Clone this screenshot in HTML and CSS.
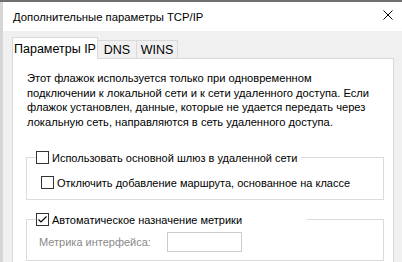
FILE: index.html
```html
<!DOCTYPE html>
<html lang="ru">
<head>
    <meta charset="UTF-8">
    <title>Дополнительные параметры TCP/IP</title>
    <link rel="stylesheet" href="styles.css">
</head>
<body>
    <div class="desktop">
        <div class="edge"></div>
        <div class="dialog">
            <div class="titlebar">
                <span class="title">Дополнительные параметры TCP/IP</span>
                <svg class="close" width="10" height="10" viewBox="0 0 10 10">
                    <path d="M0.5 0.5L9.5 9.5M9.5 0.5L0.5 9.5" stroke="#000" stroke-width="1" fill="none"/>
                </svg>
            </div>

            <div class="content">
                <div class="tabs">
                    <div class="tab active">Параметры IP</div>
                    <div class="tab dns">DNS</div>
                    <div class="tab wins">WINS</div>
                </div>

                <div class="panel">
                    <p class="note">
                        Этот флажок используется только при одновременном<br>
                        подключении к локальной сети и к сети удаленного доступа. Если<br>
                        флажок установлен, данные, которые не удается передать через<br>
                        локальную сеть, направляются в сеть удаленного доступа.
                    </p>

                    <fieldset class="group gateway">
                        <legend>
                            <div class="option">
                                <span class="check"></span>
                                <span>Использовать основной шлюз в удаленной сети</span>
                            </div>
                        </legend>
                        <div class="option sub">
                            <span class="check"></span>
                            <span>Отключить добавление маршрута, основанное на классе</span>
                        </div>
                    </fieldset>

                    <fieldset class="group metric">
                        <legend>
                            <div class="option">
                                <span class="check">
                                    <svg width="11" height="11" viewBox="0 0 11 11">
                                        <path d="M1.5 5.5L4 8L9.5 2.5" stroke="#000" stroke-width="1.2" fill="none"/>
                                    </svg>
                                </span>
                                <span>Автоматическое назначение метрики</span>
                            </div>
                        </legend>
                        <div class="field">
                            <span class="field-label">Метрика интерфейса:</span>
                            <span class="input"></span>
                        </div>
                    </fieldset>
                </div>
            </div>
        </div>
    </div>
</body>
</html>
```

FILE: styles.css
```css
* {
    margin: 0;
    padding: 0;
    box-sizing: border-box;
}

body {
    width: 402px;
    height: 262px;
    overflow: hidden;
    background: #f0f0f0;
    font-family: "Liberation Sans", Arial, sans-serif;
    font-size: 11px;
    color: #000;
}

.desktop {
    display: flex;
    height: 262px;
    border-top: 2px solid #6f6f6f;
}

.edge {
    width: 3px;
    flex: none;
    background: #d6d6d6;
}

.dialog {
    flex: 1;
    display: flex;
    flex-direction: column;
    min-width: 0;
}

.titlebar {
    height: 29px;
    flex: none;
    background: #fff;
    display: flex;
    align-items: center;
    padding: 0 9px 0 10px;
}

.title {
    flex: 1;
    font-size: 11.3px;
    white-space: nowrap;
}

.close {
    margin-top: -3px;
}

.content {
    flex: 1;
    display: flex;
    flex-direction: column;
    padding: 6px 8px 0 9px;
}

.tabs {
    display: flex;
    align-items: flex-end;
    height: 21px;
    flex: none;
    position: relative;
    z-index: 1;
    font-size: 12.5px;
}

.tab {
    height: 18px;
    border: 1px solid #d9d9d9;
    border-bottom: none;
    background: #f0f0f0;
    display: flex;
    align-items: center;
    justify-content: center;
    margin-left: -1px;
    white-space: nowrap;
}

.tab.active {
    width: 86px;
    height: 22px;
    margin-left: 0;
    margin-bottom: -1px;
    background: #fff;
    position: relative;
    z-index: 2;
}

.tab.dns {
    width: 40px;
}

.tab.wins {
    width: 42px;
}

.panel {
    flex: 1;
    background: #fff;
    border: 1px solid #d9d9d9;
    border-bottom: none;
    padding: 12px 9px 0 13px;
}

.note {
    padding-left: 1px;
    font-size: 11.15px;
    line-height: 14.5px;
    white-space: nowrap;
}

.group {
    border: 1px solid #dcdcdc;
    padding: 0 9px;
}

.group legend {
    padding: 0;
}

.option {
    display: flex;
    align-items: center;
    gap: 3px;
    height: 15px;
    white-space: nowrap;
}

.gateway {
    margin-top: 21px;
    padding-bottom: 9px;
}

.gateway legend {
    width: 265px;
}

.option.sub {
    margin: 10px 0 0 5px;
}

.metric {
    margin-top: 12px;
    padding-bottom: 8px;
}

.metric legend {
    width: 271px;
}

.check {
    width: 13px;
    height: 13px;
    flex: none;
    border: 1px solid #333;
    background: #fff;
    display: flex;
    align-items: center;
    justify-content: center;
}

.field {
    display: flex;
    align-items: center;
    margin: 5px 0 0 3px;
    height: 20px;
    white-space: nowrap;
}

.field-label {
    width: 128px;
    color: #8a8a8a;
}

.input {
    width: 75px;
    height: 20px;
    border: 1px solid #cccccc;
    background: #fff;
}
```
